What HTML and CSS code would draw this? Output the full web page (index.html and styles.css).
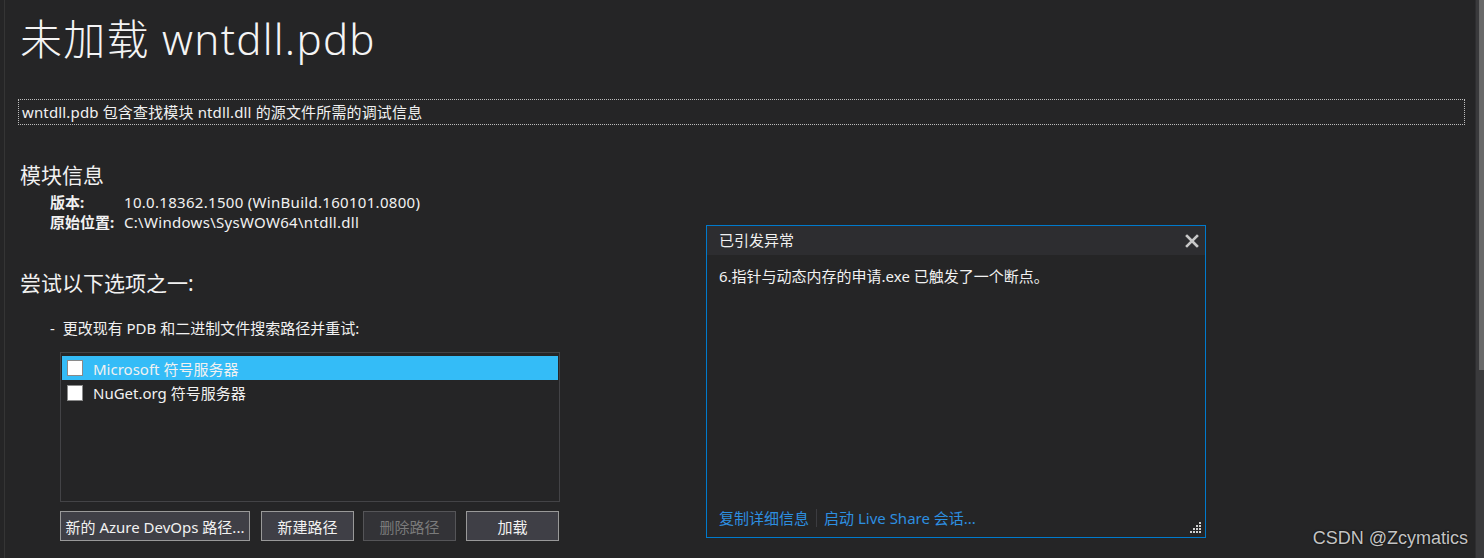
FILE: index.html
```html
<!DOCTYPE html>
<html lang="zh">
<head>
<meta charset="utf-8">
<title>未加载 wntdll.pdb</title>
<link rel="stylesheet" href="styles.css">
</head>
<body>
<div class="frame">
  <div class="content">
    <h1 class="title">未加载 wntdll.pdb</h1>
    <div class="info-box">wntdll.pdb 包含查找模块 ntdll.dll 的源文件所需的调试信息</div>

    <h2 class="section">模块信息</h2>
    <div class="props">
      <div class="prop-row"><span class="prop-key">版本:</span><span class="prop-val">10.0.18362.1500 (WinBuild.160101.0800)</span></div>
      <div class="prop-row"><span class="prop-key">原始位置:</span><span class="prop-val">C:\Windows\SysWOW64\ntdll.dll</span></div>
    </div>

    <h2 class="section section-try">尝试以下选项之一:</h2>
    <div class="option">-&nbsp; 更改现有 PDB 和二进制文件搜索路径并重试:</div>

    <div class="listbox">
      <div class="list-item selected"><span class="check"></span><span>Microsoft 符号服务器</span></div>
      <div class="list-item"><span class="check"></span><span>NuGet.org 符号服务器</span></div>
    </div>

    <div class="buttons">
      <button class="btn btn-wide">新的 Azure DevOps 路径...</button>
      <button class="btn">新建路径</button>
      <button class="btn disabled">删除路径</button>
      <button class="btn">加载</button>
    </div>
  </div>

  <div class="popup">
    <div class="popup-head">
      <span>已引发异常</span>
      <svg class="close" width="14" height="14" viewBox="0 0 14 14"><path d="M2 2 L12 12 M12 2 L2 12" stroke="#c8c8c8" stroke-width="2.6" stroke-linecap="square"/></svg>
    </div>
    <div class="popup-body">6.指针与动态内存的申请.exe 已触发了一个断点。</div>
    <div class="popup-links">
      <span class="link">复制详细信息</span>
      <span class="sep"></span>
      <span class="link">启动 Live Share 会话...</span>
    </div>
    <svg class="grip" width="12" height="12" viewBox="0 0 12 12">
      <g fill="#d0d0d0">
        <rect x="9" y="0" width="2" height="2"/>
        <rect x="6" y="3" width="2" height="2"/><rect x="9" y="3" width="2" height="2"/>
        <rect x="3" y="6" width="2" height="2"/><rect x="6" y="6" width="2" height="2"/><rect x="9" y="6" width="2" height="2"/>
        <rect x="0" y="9" width="2" height="2"/><rect x="3" y="9" width="2" height="2"/><rect x="6" y="9" width="2" height="2"/><rect x="9" y="9" width="2" height="2"/>
      </g>
    </svg>
  </div>

  <div class="scrollbar"><div class="thumb"></div></div>
  <div class="watermark">CSDN @Zcymatics</div>
</div>
</body>
</html>
```

FILE: styles.css
```css
html, body {
  margin: 0;
  padding: 0;
  background: #252526;
}
body {
  font-family: "Noto Sans", "Noto Sans CJK SC", sans-serif;
  color: #f1f1f1;
  width: 1484px;
  height: 558px;
  overflow: hidden;
}
.frame {
  position: relative;
  height: 558px;
  margin-left: 4px;
  border-left: 1px solid #353535;
}
.content {
  padding-left: 15px;
  padding-top: 11px;
}
.title {
  margin: 0;
  font-size: 42px;
  font-weight: 300;
  line-height: 56px;
  color: #f4f4f4;
  letter-spacing: 1.3px;
}
.info-box {
  margin-top: 32px;
  margin-left: -2px;
  width: 1442px;
  height: 24px;
  border: 1px dotted #bdbdbd;
  font-size: 15px;
  line-height: 24px;
  padding-left: 3px;
  white-space: nowrap;
  letter-spacing: 0.15px;
}
.section {
  margin: 36px 0 0 0;
  font-size: 21px;
  font-weight: 400;
  line-height: 28px;
}
.props {
  margin-left: 30px;
  margin-top: 3px;
  font-size: 15px;
}
.prop-row {
  display: flex;
  line-height: 20px;
}
.prop-key {
  width: 74px;
  font-weight: 700;
}
.prop-val {
  letter-spacing: 0.3px;
}
.section-try {
  margin-top: 37px;
}
.option {
  margin-top: 21px;
  margin-left: 30px;
  font-size: 15px;
  line-height: 20px;
}
.listbox {
  margin-top: 14px;
  margin-left: 40px;
  width: 496px;
  height: 144px;
  border: 1px solid #434346;
  padding: 3px 1px 1px 1px;
}
.list-item {
  display: flex;
  align-items: center;
  height: 25px;
  font-size: 15px;
  gap: 10px;
  padding-left: 5px;
}
.list-item.selected {
  background: #34bcf7;
  height: 24px;
}
.check {
  width: 14px;
  height: 14px;
  background: #fff;
  border: 1px solid #8a8a8a;
}
.buttons {
  display: flex;
  margin-top: 9px;
  margin-left: 40px;
}
.btn {
  font-family: inherit;
  font-size: 15px;
  color: #f1f1f1;
  background: #3f3f46;
  border: 1px solid #999999;
  height: 30px;
  width: 93px;
  padding: 0;
  margin-right: 10px;
}
.btn-wide {
  width: 190px;
  margin-right: 11px;
}
.btn.disabled {
  color: #7a7a7a;
  border-color: #555558;
  background: #333337;
  margin-right: 10px;
}
.btn:nth-child(2) {
  margin-right: 9px;
}
.popup {
  position: absolute;
  left: 701px;
  top: 225px;
  width: 498px;
  height: 311px;
  border: 1px solid #007acc;
  background: #252526;
  display: flex;
  flex-direction: column;
}
.popup-head {
  height: 29px;
  background: #2d2d30;
  display: flex;
  align-items: center;
  justify-content: space-between;
  padding: 0 6px 2px 12px;
  box-sizing: border-box;
  font-size: 15px;
}
.close {
  display: block;
  margin-top: 2px;
}
.popup-body {
  padding: 11px 12px 0 12px;
  font-size: 15px;
  line-height: 20px;
  flex: 1;
}
.popup-links {
  display: flex;
  align-items: center;
  padding: 0 0 9px 12px;
  font-size: 15px;
  line-height: 20px;
  gap: 7px;
}
.link {
  color: #2d8fe0;
}
.sep {
  width: 1px;
  height: 18px;
  background: #3c3c40;
}
.grip {
  position: absolute;
  right: 3px;
  bottom: 3px;
}
.scrollbar {
  position: absolute;
  right: 0;
  top: 0;
  width: 8px;
  height: 558px;
  background: #3a3a3c;
  border-left: 1px solid #2e2e30;
}
.thumb {
  margin-left: 3px;
  width: 5px;
  height: 370px;
  background: #686868;
}
.watermark {
  position: absolute;
  right: 16px;
  bottom: 9px;
  font-family: "Liberation Sans", sans-serif;
  font-size: 18px;
  color: #c4c4c4;
  text-shadow: 0 0 2px #000;
}
```
